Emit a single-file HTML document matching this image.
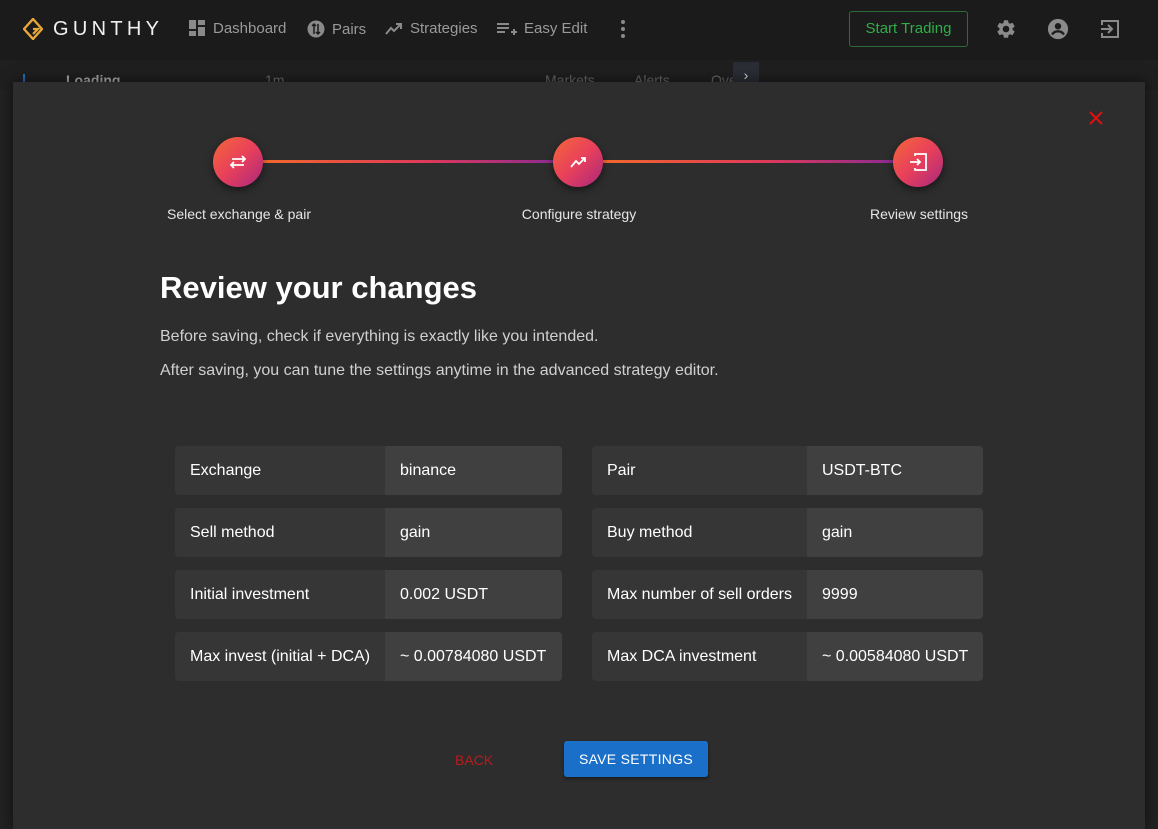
<!DOCTYPE html>
<html><head><meta charset="utf-8"><style>
*{box-sizing:border-box;margin:0;padding:0}
html,body{width:1158px;height:829px;overflow:hidden}
body{background:#222;font-family:"Liberation Sans",Arial,sans-serif;position:relative}
.top{position:absolute;left:0;top:0;width:1158px;height:60px;background:#1b1b1b}
.nav{position:absolute;top:20px;font-size:15px;color:#9a9a9a;display:flex;align-items:center;gap:7px}
.tb{position:absolute;left:0;top:60px;width:1158px;height:30px;background:#1f1f1f;color:#666;font-size:14px}
.modal{position:absolute;left:13px;top:82px;width:1132px;height:747px;background:#2d2d2d;box-shadow:0 0 14px rgba(0,0,0,.6)}
.circ{position:absolute;width:50px;height:50px;border-radius:50%;background:linear-gradient(135deg,#f5663a,#e8405a 50%,#a8287e);box-shadow:0 3px 8px rgba(0,0,0,.5);display:flex;align-items:center;justify-content:center}
.line{position:absolute;height:3px;top:78px;background:linear-gradient(90deg,#f0682c,#e03a5a 55%,#8e2a90)}
.lbl{position:absolute;top:124px;font-size:14px;color:#e6e6e6;transform:translateX(-50%);white-space:nowrap}
.row{position:absolute;height:49px;border-radius:4px;overflow:hidden;display:flex;font-size:16px;color:#fff}
.row .k{background:#363636;padding-left:15px;line-height:49px}
.row .v{background:#404040;flex:1;padding-left:15px;line-height:49px}
</style></head><body>
<div class="top">
 <svg style="position:absolute;left:23px;top:18px" width="20" height="22" viewBox="0 0 20 22"><path d="M10 1 L19 11 L10 21 L1 11 Z" fill="none" stroke="#e8a838" stroke-width="2.4"/><path d="M10 11 L15 11 L10 16" fill="none" stroke="#e8a838" stroke-width="2.2"/></svg>
 <div style="position:absolute;left:53px;top:18px;font-size:20px;letter-spacing:4.3px;color:#f0f0f0">GUNTHY</div>
 <div class="nav" style="left:189px"><svg width="17" height="17"><rect x="0" y="0" width="7" height="9" fill="#8a8a8a"/><rect x="9" y="0" width="7" height="5" fill="#8a8a8a"/><rect x="0" y="11" width="7" height="5" fill="#8a8a8a"/><rect x="9" y="7" width="7" height="9" fill="#8a8a8a"/></svg>Dashboard</div>
 <div class="nav" style="left:307px"><svg width="18" height="18"><circle cx="9" cy="9" r="8.5" fill="#8a8a8a"/><path d="M7 4v10M5 6l2-2 2 2M11 14V4M9 12l2 2 2-2" stroke="#1b1b1b" stroke-width="1.5" fill="none"/></svg>Pairs</div>
 <div class="nav" style="left:385px"><svg width="18" height="14"><path d="M1 12 L6 6 L9 9 L16 2 M11 2h5v5" stroke="#8a8a8a" stroke-width="2" fill="none"/></svg>Strategies</div>
 <div class="nav" style="left:497px"><svg width="20" height="14"><path d="M0 2h12M0 6h12M0 10h8M14 10h6M17 7v6" stroke="#8a8a8a" stroke-width="2"/></svg>Easy Edit</div>
 <svg style="position:absolute;left:620px;top:19px" width="6" height="20"><circle cx="3" cy="3" r="2" fill="#8a8a8a"/><circle cx="3" cy="10" r="2" fill="#8a8a8a"/><circle cx="3" cy="17" r="2" fill="#8a8a8a"/></svg>
 <div style="position:absolute;left:849px;top:11px;width:119px;height:36px;border:1px solid #2e6b37;border-radius:3px;color:#2fae47;font-size:15px;text-align:center;line-height:34px">Start Trading</div>
 <svg style="position:absolute;left:995px;top:18px" width="22" height="22" viewBox="0 0 24 24"><path fill="#8a8a8a" d="M19.14 12.94c.04-.3.06-.61.06-.94 0-.32-.02-.64-.07-.94l2.03-1.58a.49.49 0 00.12-.61l-1.92-3.32a.49.49 0 00-.59-.22l-2.39.96c-.5-.38-1.03-.7-1.62-.94l-.36-2.54a.48.48 0 00-.48-.41h-3.84c-.24 0-.43.17-.47.41l-.36 2.54c-.59.24-1.13.57-1.62.94l-2.39-.96a.48.48 0 00-.59.22L2.74 8.87c-.12.21-.08.47.12.61l2.03 1.58c-.05.3-.09.63-.09.94s.02.64.07.94l-2.03 1.58a.49.49 0 00-.12.61l1.92 3.32c.12.22.37.29.59.22l2.39-.96c.5.38 1.03.7 1.62.94l.36 2.54c.05.24.24.41.48.41h3.84c.24 0 .44-.17.47-.41l.36-2.54c.59-.24 1.13-.56 1.62-.94l2.39.96c.22.08.47 0 .59-.22l1.92-3.32c.12-.22.07-.47-.12-.61l-2.01-1.58zM12 15.6A3.6 3.6 0 1112 8.4a3.6 3.6 0 010 7.2z"/></svg>
 <svg style="position:absolute;left:1047px;top:18px" width="22" height="22" viewBox="0 0 24 24"><circle cx="12" cy="12" r="11" fill="#8a8a8a"/><circle cx="12" cy="9" r="3.5" fill="#1b1b1b"/><path d="M5.5 18c2-3 4-3.5 6.5-3.5s4.5.5 6.5 3.5" stroke="#1b1b1b" stroke-width="2.5" fill="none"/></svg>
 <svg style="position:absolute;left:1100px;top:19px" width="20" height="20" viewBox="0 0 20 20"><path d="M2 6V2h16v16H2v-4M1 10h11M8 6l4 4-4 4" stroke="#8a8a8a" stroke-width="2" fill="none"/></svg>
</div>
<div class="tb"><div style="position:absolute;left:23px;top:14px;width:2px;height:16px;background:#1e6ec8"></div><span style="position:absolute;left:66px;top:12px;font-weight:bold;color:#aaa">Loading</span><span style="position:absolute;left:265px;top:12px">1m</span><span style="position:absolute;left:545px;top:12px">Markets</span><span style="position:absolute;left:634px;top:12px">Alerts</span><span style="position:absolute;left:711px;top:12px">Ove</span><div style="position:absolute;left:733px;top:2px;width:26px;height:28px;background:#2a2d35;color:#ddd;text-align:center;line-height:26px">›</div></div>
<div class="modal">
 <svg style="position:absolute;left:1076px;top:29px" width="14" height="14"><path d="M1 1l12 12M13 1L1 13" stroke="#e01010" stroke-width="2"/></svg>
 <div class="line" style="left:250px;width:292px"></div>
 <div class="line" style="left:590px;width:292px"></div>
 <div class="circ" style="left:200px;top:55px"><svg width="16" height="14"><path d="M1 10h13M4 7l-3 3 3 3M15 4H2M12 1l3 3-3 3" stroke="#fff" stroke-width="1.8" fill="none"/></svg></div>
 <div class="circ" style="left:540px;top:55px"><svg width="16" height="12"><path d="M1 11 L6 5 L9 8 L15 2 M11 2h4v4" stroke="#fff" stroke-width="1.8" fill="none"/></svg></div>
 <div class="circ" style="left:880px;top:55px"><svg width="18" height="18"><path d="M6 3V1h11v16H6v-2M1 9h10M8 6l3 3-3 3" stroke="#fff" stroke-width="1.8" fill="none"/></svg></div>
 <div class="lbl" style="left:226px">Select exchange &amp; pair</div>
 <div class="lbl" style="left:566px">Configure strategy</div>
 <div class="lbl" style="left:906px">Review settings</div>
 <div style="position:absolute;left:147px;top:188px;font-size:31px;font-weight:bold;color:#fff">Review your changes</div>
 <div style="position:absolute;left:147px;top:246px;font-size:16px;color:#d0d0d0">Before saving, check if everything is exactly like you intended.</div>
 <div style="position:absolute;left:147px;top:280px;font-size:16px;color:#d0d0d0">After saving, you can tune the settings anytime in the advanced strategy editor.</div>
 <div class="row" style="left:162px;top:364px;width:387px"><div class="k" style="width:210px">Exchange</div><div class="v">binance</div></div>
 <div class="row" style="left:162px;top:426px;width:387px"><div class="k" style="width:210px">Sell method</div><div class="v">gain</div></div>
 <div class="row" style="left:162px;top:488px;width:387px"><div class="k" style="width:210px">Initial investment</div><div class="v">0.002 USDT</div></div>
 <div class="row" style="left:162px;top:550px;width:387px"><div class="k" style="width:210px">Max invest (initial + DCA)</div><div class="v">~ 0.00784080 USDT</div></div>
 <div class="row" style="left:579px;top:364px;width:391px"><div class="k" style="width:215px">Pair</div><div class="v">USDT-BTC</div></div>
 <div class="row" style="left:579px;top:426px;width:391px"><div class="k" style="width:215px">Buy method</div><div class="v">gain</div></div>
 <div class="row" style="left:579px;top:488px;width:391px"><div class="k" style="width:215px">Max number of sell orders</div><div class="v">9999</div></div>
 <div class="row" style="left:579px;top:550px;width:391px"><div class="k" style="width:215px">Max DCA investment</div><div class="v">~ 0.00584080 USDT</div></div>
 <div style="position:absolute;left:442px;top:670px;font-size:14px;color:#b71c1c">BACK</div>
 <div style="position:absolute;left:551px;top:659px;width:144px;height:36px;background:#1a6fc9;border-radius:3px;color:#fff;font-size:14px;text-align:center;line-height:36px;letter-spacing:.3px;box-shadow:0 2px 3px rgba(0,0,0,.4)">SAVE SETTINGS</div>
</div>
</body></html>
